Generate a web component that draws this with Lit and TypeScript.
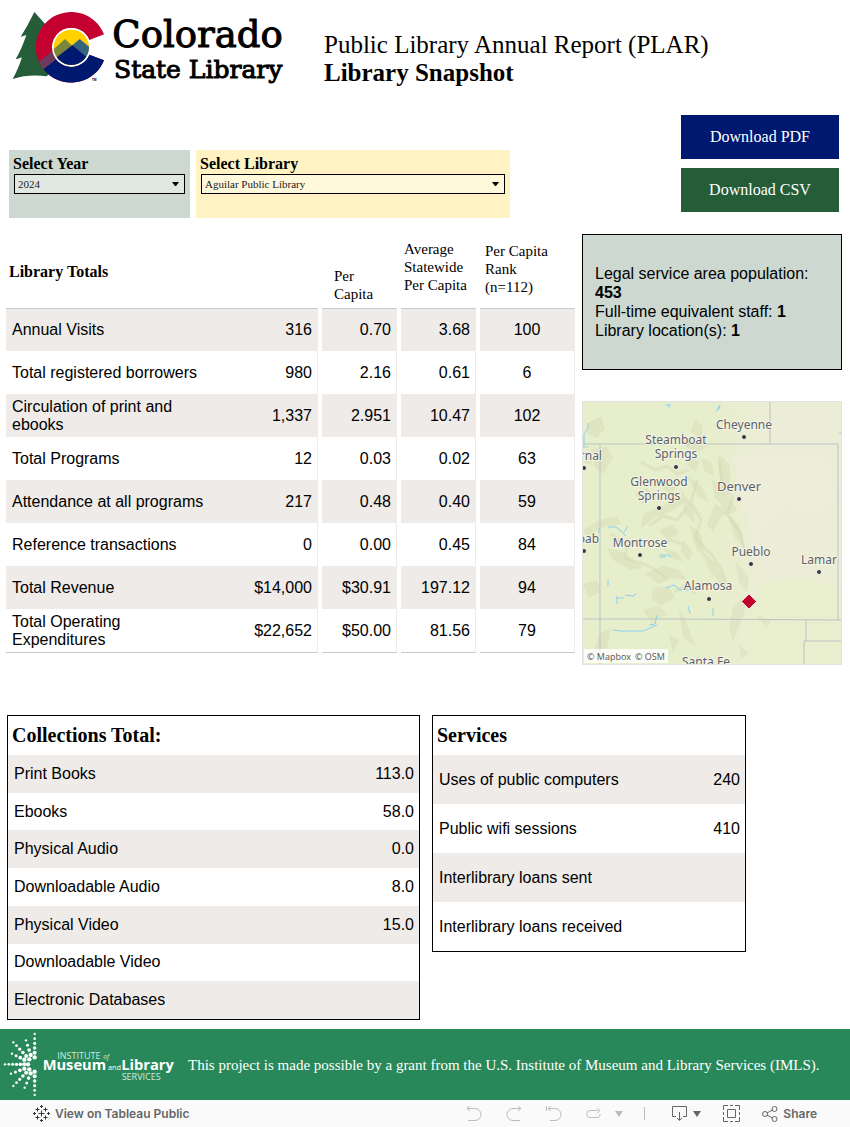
import { LitElement, html, css, svg } from "lit";
import { customElement, state } from "lit/decorators.js";

const SERIF = css`"Liberation Serif", "Times New Roman", serif`;
const SANS = css`"Liberation Sans", Arial, sans-serif`;

@customElement("state-logo")
class StateLogo extends LitElement {
  static styles = css`
    :host { display: block; }
    svg { display: block; width: 300px; height: 100px; }
    .big, .small { stroke: #000; stroke-width: 3px; }
    .big { font: 111px "DejaVu Serif", serif; }
    .small { font: 75px "DejaVu Serif", serif; }
    .tm { font: bold 10px ${SANS}; }
  `;
  render() {
    return html`<svg viewBox="0 0 900 300" role="img" aria-label="Colorado State Library">
      <defs>
        <clipPath id="c"><path d="M312 103A106 106 0 1 0 312 181L268 164A58 58 0 1 1 268 120Z" /></clipPath>
        <clipPath id="d"><circle cx="214" cy="142" r="53" /></clipPath>
      </defs>
      <path fill="#245d38" d="M103 36C90 63 76 88 62 110Q70 109 79 105C70 132 60 155 47 178Q56 177 66 172C58 197 49 218 38 237Q85 222 140 229L170 200V110Z" />
      <g clip-path="url(#c)">
        <rect x="90" y="20" width="240" height="240" fill="#c3002f" />
        <path fill="#6d3a5d" d="M100 197L165 148L190 175L120 222Z" />
        <path fill="#001970" d="M100 232L214 142H340V270H100Z" />
      </g>
      <circle cx="214" cy="142" r="58" fill="#fff" />
      <g clip-path="url(#d)">
        <rect x="150" y="80" width="130" height="130" fill="#ffd100" />
        <path fill="#7a863b" d="M140 166L195 117L230 150L170 200Z" />
        <path fill="#35647e" d="M239 117L290 160L260 200L200 150Z" />
        <path fill="#001970" d="M217 136L290 196V220H130V202Z" />
      </g>
      <text class="tm" x="275" y="242">TM</text>
      <text class="big" x="337" y="142">Colorado</text>
      <text class="small" x="342" y="234">State Library</text>
    </svg>`;
  }
}

const RAYS: number[][] = [
  [104, 97, 104, 27, 6], [92, 90, 78, 46, 4], [88, 103, 40, 52, 6], [73, 104, 36, 86, 4],
  [84, 118, 15, 118, 7],
  [73, 131, 33, 146, 4], [88, 133, 40, 183, 6], [92, 145, 74, 188, 4], [104, 140, 104, 210, 6],
];

@customElement("imls-logo")
class ImlsLogo extends LitElement {
  static styles = css`
    :host { display: block; }
    svg { display: block; width: 180px; height: 71px; fill: #fff; }
    .thin { font: 400 27px "Open Sans", sans-serif; fill: #d5e8de; }
    .thin-italic { font: italic 20px "Open Sans", sans-serif; fill: #d5e8de; }
    .bold { font: 700 44px "Open Sans", sans-serif; }
    .mid { font: 400 22px "Open Sans", sans-serif; }
  `;
  render() {
    return html`<svg viewBox="0 12 540 213" role="img" aria-label="Institute of Museum and Library Services">
      ${RAYS.map(([x1, y1, x2, y2, n]) =>
        Array.from({ length: n }, (_, i) => {
          const t = i / (n - 1);
          return svg`<circle cx=${x1 + (x2 - x1) * t} cy=${y1 + (y2 - y1) * t} r=${6.5 - 3 * t} />`;
        }))}
      <text class="thin" x="172" y="101">INSTITUTE</text>
      <text class="thin-italic" x="310" y="101">of</text>
      <text class="bold" x="128" y="135">Museum</text>
      <text class="mid" x="324" y="135">and</text>
      <text class="bold" x="364" y="135">Library</text>
      <text class="thin" x="365" y="164">SERVICES</text>
    </svg>`;
  }
}

interface Place { name: string[]; x: number; y: number; dx: number; dy: number; big?: boolean; }

const PLACES: Place[] = [
  { name: ["Cheyenne"], x: 161, y: 27, dx: 161, dy: 36 },
  { name: ["Steamboat", "Springs"], x: 93, y: 42, dx: 93, dy: 66 },
  { name: ["Glenwood", "Springs"], x: 76, y: 84, dx: 76, dy: 107 },
  { name: ["Denver"], x: 156, y: 89, dx: 156, dy: 98, big: true },
  { name: ["Montrose"], x: 57, y: 145, dx: 57, dy: 154 },
  { name: ["Pueblo"], x: 168, y: 154, dx: 168, dy: 163 },
  { name: ["Lamar"], x: 236, y: 162, dx: 236, dy: 171 },
  { name: ["Alamosa"], x: 125, y: 188, dx: 126, dy: 198 },
  { name: ["Vernal"], x: 1, y: 58, dx: 1, dy: 67 },
  { name: ["Moab"], x: 0, y: 141, dx: 1, dy: 150 },
  { name: ["Santa Fe"], x: 123, y: 264, dx: 123, dy: 275 },
];

@customElement("place-map")
class PlaceMap extends LitElement {
  static styles = css`
    :host { display: block; border: 1px solid #e2e2de; }
    svg { display: block; width: 100%; height: auto; overflow: hidden; }
    text { font-family: "Noto Sans", sans-serif; font-size: 12px; }
    .city { fill: #5d6168; text-anchor: middle; stroke: #f4f5e6; stroke-width: 2px; paint-order: stroke; }
    .capital { font-size: 13px; }
    .dot { fill: #34363a; stroke: #f8f8f0; stroke-width: 1px; }
    .border { fill: none; stroke: #bfc1c4; stroke-width: 1px; }
    .water { fill: none; stroke: #86d2f0; stroke-width: 1px; }
    .credit { font-family: "Open Sans", sans-serif; font-size: 9px; fill: #555; }
  `;
  render() {
    return html`<svg viewBox="0 0 258 262" role="img" aria-label="Map of Colorado with the library marked">
      <defs>
        <linearGradient id="land" x1="0" x2="1">
          <stop offset="0.5" stop-color="#e7eecb" />
          <stop offset="0.72" stop-color="#ecedd7" />
        </linearGradient>
      </defs>
      <rect width="258" height="262" fill="url(#land)" />
      <path fill="#f0ecdc" opacity="0.6" d="M150 55L190 50L245 58L252 100L225 112L205 104L185 118L172 150L166 120L155 95Z" />
      <path fill="#e8edcc" opacity="0.8" d="M180 182L215 175L258 185V262H165V205Z" />
      <g fill="#cdd1ab" opacity="0.3">
        <path d="M4 22L18 14L22 26L14 36L4 32ZM8 48L24 44L30 56L20 72L12 66ZM112 17L120 25L118 36L108 30ZM97 40L112 34L126 42L116 50L104 46ZM135 52L146 62L148 78L140 86L136 72ZM128 76L142 88L154 108L148 112L132 96Z" />
        <path d="M60 112L78 105L96 94L104 98L90 108L72 116L58 126ZM0 128L16 118L34 114L38 122L18 126L4 134ZM24 146L40 150L60 166L48 168L30 158ZM104 74L118 84L126 100L116 96ZM98 88L110 104L112 122L102 112ZM106 122L118 132L122 156L114 148Z" />
        <path d="M120 150L134 162L146 186L138 182L126 168ZM132 102L124 122L130 130L138 114L150 110ZM144 110L156 124L162 146L152 136ZM152 158L166 176L164 190L156 180ZM150 204L166 192L160 214L150 240L146 226ZM156 242L166 252L158 256Z" />
        <path d="M62 172L80 164L96 168L104 178L90 176L76 182ZM70 186L86 184L92 196L78 204L68 196ZM60 208L76 204L84 212L68 220ZM96 206L104 222L112 244L100 236ZM0 182L14 178L18 190L6 196ZM16 232L28 226L24 246L12 248ZM76 128L90 122L96 132L84 138ZM80 146L94 150L100 160L88 156Z" />
        <path d="M52 92L64 86L70 94L58 102ZM106 54L116 60L112 70L104 64ZM118 56L128 60L132 74L122 70ZM84 78L94 84L88 92L80 88ZM100 138L110 150L106 160L98 150ZM174 214L188 218L184 226ZM0 60L8 56L10 64ZM86 232L96 238L90 250Z" />
      </g>
      <g fill="none" stroke="#c9cca5" stroke-width="3" opacity="0.28">
        <path d="M58 60L72 68L84 64L94 72L106 68M114 78L108 100L118 118L112 136L128 152L138 166L146 190M136 60L140 84L150 96L144 112L158 132L162 154M28 132L44 144L42 156L66 164L84 176M66 124L80 114L94 118L104 106M72 146L88 138L100 142M92 190L104 182L112 192" />
      </g>
      <g class="water">
        <path d="M83 3h5M86 3v3M134 7l3-4l-1 4l-3 2M1 44v-12l4-6v-5M0 45h5M100 30v5l4 2M25 125h8l5 4l5 5M41 130l4-6M16 131v-5M76 153h9l3 2M77 155h6M25 178v6M83 186l8-3l6 5h9M33 196h8M34 194v8M42 193l8 1l3-2M105 204l2 8M130 206v8M30 228l8 1h22l14-6M66 223l6-1l2-9M115 255v5M257 30v2" />
      </g>
      <path class="border" d="M187 0V42M0 42H255M17 42V262M255 42V218M0 217H92L258 218M223 218V239M258 239H221V262" />
      ${PLACES.map((p) => svg`
        <circle class="dot" cx=${p.dx} cy=${p.dy - 1} r="2.5" />
        ${p.name.map((line, i) => svg`<text class="city ${p.big ? "capital" : ""}" x=${p.x} y=${p.y + i * 14}>${line}</text>`)}
      `)}
      <path d="M166 192L173.500 199.500L166 207L158.500 199.500Z" fill="#c3002f" stroke="#f3e3dc" stroke-width="1" />
      <rect x="1" y="247" width="84" height="14" fill="#fff" opacity="0.8" />
      <text class="credit" x="4" y="258">© Mapbox</text>
      <text class="credit" x="52" y="258">© OSM</text>
    </svg>`;
  }
}

const TOTALS: string[][] = [
  ["Annual Visits", "316", "0.70", "3.68", "100"],
  ["Total registered borrowers", "980", "2.16", "0.61", "6"],
  ["Circulation of print and ebooks", "1,337", "2.951", "10.47", "102"],
  ["Total Programs", "12", "0.03", "0.02", "63"],
  ["Attendance at all programs", "217", "0.48", "0.40", "59"],
  ["Reference transactions", "0", "0.00", "0.45", "84"],
  ["Total Revenue", "$14,000", "$30.91", "197.12", "94"],
  ["Total Operating Expenditures", "$22,652", "$50.00", "81.56", "79"],
];

const COLLECTIONS: string[][] = [
  ["Print Books", "113.0"], ["Ebooks", "58.0"], ["Physical Audio", "0.0"], ["Downloadable Audio", "8.0"],
  ["Physical Video", "15.0"], ["Downloadable Video", ""], ["Electronic Databases", ""],
];

const SERVICES: string[][] = [
  ["Uses of public computers", "240"], ["Public wifi sessions", "410"],
  ["Interlibrary loans sent", ""], ["Interlibrary loans received", ""],
];

@customElement("app-root")
class AppRoot extends LitElement {
  @state() private year = "2024";
  @state() private library = "Aguilar Public Library";

  static styles = css`
    :host { display: block; background: #fff; color: #000; font-family: ${SANS}; font-size: 16px; }
    * { box-sizing: border-box; }
    h1, h2, p { margin: 0; font-weight: 400; }
    button { border: 0; background: none; padding: 0; font: inherit; color: inherit; cursor: pointer; }

    .header { display: flex; gap: 24px; height: 115px; }
    .title { font: 25px/28px ${SERIF}; padding-top: 31px; }
    .title strong { display: block; }

    .controls { display: grid; grid-template-columns: 181fr 314fr 159fr 158fr; column-gap: 6px; padding: 0 11px 0 9px; align-items: end; }
    .filter { display: flex; flex-direction: column; padding: 4px 5px 24px; margin-bottom: -6px; }
    .filter label { font: bold 16px/20px ${SERIF}; margin-left: -1px; }
    .year { background: #cdd9d0; }
    .library { background: #fff3c4; }
    .pick { display: grid; }
    .pick > * { grid-area: 1 / 1; }
    .pick svg { place-self: center end; margin-right: 6px; pointer-events: none; }
    .pick select { appearance: none; height: 20px; width: 100%; border: 1px solid #000; border-radius: 0; padding: 0 3px; color: #222; background: rgba(255, 255, 255, 0.4); font: 11px ${SERIF}; }
    .downloads { display: grid; gap: 9px; grid-column: 4; }
    .downloads button { height: 44px; color: #fff; font: 16px ${SERIF}; }
    .pdf { background: #001970; }
    .csv { background: #245d38; }

    .main { display: grid; grid-template-columns: 569fr 260fr; column-gap: 7px; padding: 22px 8px 0 6px; align-items: start; }
    table { border-collapse: collapse; width: 100%; display: block; }
    thead, tbody { display: block; }
    th { font-weight: 400; text-align: left; padding: 0; }
    td { padding: 0; }

    .totals tr { display: grid; grid-template-columns: 208fr 104fr 4px 75fr 4px 75fr 4px 95fr; }
    .totals tr > :nth-child(3) { grid-column: 4; }
    .totals tr > :nth-child(4) { grid-column: 6; }
    .totals tr > :nth-child(5) { grid-column: 8; }
    .totals thead th { font: 15px/18px ${SERIF}; height: 74px; display: flex; align-items: flex-end; }
    .totals thead .h-name { font: bold 16px/18px ${SERIF}; grid-column: 1 / 3; padding: 0 3px 27px; }
    .totals thead tr > .h-per { grid-column: 4; padding: 0 12px 5px; }
    .totals thead tr > .h-avg { grid-column: 6; padding: 0 0 14px 3px; }
    .totals thead tr > .h-rank { grid-column: 8; padding: 0 0 12px 5px; }
    .totals tbody tr { height: 43px; }
    .totals tbody th, .totals tbody td { display: flex; align-items: center; line-height: 18px; }
    .totals tbody th { padding: 0 6px; }
    .totals tbody td { justify-content: flex-end; padding-right: 5px; border-right: 1px solid #eeebe8; }
    .totals tbody tr > :last-child { justify-content: center; padding: 0; }
    .totals tbody tr:nth-child(odd) > * { background: #eeebe8; }
    .totals tbody tr:first-child > * { border-top: 1px solid #c8c8c8; }
    .totals tbody tr:last-child { height: 44px; }
    .totals tbody tr:last-child > * { border-bottom: 1px solid #c8c8c8; }

    .side { display: grid; gap: 31px; }
    .facts { border: 1px solid #000; background: #cdd9d0; padding: 29px 12px; line-height: 19px; }

    .lists { display: grid; grid-template-columns: 413fr 314fr 92fr; column-gap: 12px; padding: 50px 0 9px 7px; align-items: start; }
    .panel { border: 1px solid #000; }
    .panel h2 { font: bold 20px/39px ${SERIF}; padding-left: 4px; }
    .panel tbody { display: grid; grid-auto-rows: 1fr; }
    .panel tr { display: flex; justify-content: space-between; align-items: center; padding: 0 5px 0 6px; line-height: 18px; }
    .panel tr:nth-child(odd) { background: #eeebe8; }
    .collections tbody { height: 264px; }
    .services tr { height: 49px; }

    .grant { display: flex; align-items: center; gap: 8px; background: #28885a; color: #fff; }
    .grant p { font: 15px/20px ${SERIF}; }

    .toolbar { display: flex; align-items: center; height: 27px; background: #fafafa; color: #666; padding: 0 33px; }
    .toolbar button, .toolbar a { display: flex; align-items: center; gap: 5px; color: #666; text-decoration: none; font: 600 12px/16px Inter, sans-serif; }
    .toolbar svg { display: block; fill: none; stroke: currentColor; }
    .tools { display: flex; align-items: center; margin-left: auto; }
    .tools .muted { color: #bcbcbc; }
    .history { display: flex; gap: 22px; }
    .divider { width: 1px; height: 13px; background: #bcbcbc; margin: 0 26px 0 21px; }
    .actions { display: flex; gap: 22px; }
    .toolbar .filled { fill: currentColor; stroke: none; }
  `;

  private arrow() {
    return html`<svg width="7" height="5" viewBox="0 0 7 5" aria-hidden="true"><path d="M0 0H7L4 4H3Z" /></svg>`;
  }

  private panel(kind: string, title: string, rows: string[][]) {
    return html`<section class="panel ${kind}">
      <h2>${title}</h2>
      <table aria-label=${title}>
        <tbody>${rows.map(([name, value]) => html`<tr><th scope="row">${name}</th><td>${value}</td></tr>`)}</tbody>
      </table>
    </section>`;
  }

  render() {
    return html`
      <header class="header">
        <state-logo></state-logo>
        <h1 class="title">Public Library Annual Report (PLAR) <strong>Library Snapshot</strong></h1>
      </header>

      <div class="controls">
        <div class="filter year">
          <label for="year">Select Year</label>
          <div class="pick">
            <select id="year" @change=${(e: Event) => (this.year = (e.target as HTMLSelectElement).value)}>
              <option>${this.year}</option>
            </select>
            ${this.arrow()}
          </div>
        </div>
        <div class="filter library">
          <label for="library">Select Library</label>
          <div class="pick">
            <select id="library" @change=${(e: Event) => (this.library = (e.target as HTMLSelectElement).value)}>
              <option>${this.library}</option>
            </select>
            ${this.arrow()}
          </div>
        </div>
        <div class="downloads">
          <button class="pdf">Download PDF</button>
          <button class="csv">Download CSV</button>
        </div>
      </div>

      <main>
        <div class="main">
          <table class="totals">
            <thead>
              <tr>
                <th class="h-name" scope="col">Library Totals</th>
                <th class="h-per" scope="col">Per Capita</th>
                <th class="h-avg" scope="col">Average Statewide Per Capita</th>
                <th class="h-rank" scope="col">Per Capita<br />Rank<br />(n=112)</th>
              </tr>
            </thead>
            <tbody>
              ${TOTALS.map(([name, ...cells]) => html`<tr><th scope="row">${name}</th>${cells.map((c) => html`<td>${c}</td>`)}</tr>`)}
            </tbody>
          </table>
          <div class="side">
            <div class="facts">
              <p>Legal service area population: <strong>453</strong></p>
              <p>Full-time equivalent staff: <strong>1</strong></p>
              <p>Library location(s): <strong>1</strong></p>
            </div>
            <place-map></place-map>
          </div>
        </div>
        <div class="lists">
          ${this.panel("collections", "Collections Total:", COLLECTIONS)}
          ${this.panel("services", "Services", SERVICES)}
        </div>
      </main>

      <div class="grant">
        <imls-logo></imls-logo>
        <p>This project is made possible by a grant from the U.S. Institute of Museum and Library Services (IMLS).</p>
      </div>

      <footer class="toolbar">
        <a href="#view">
          <svg width="17" height="17" viewBox="0 0 17 17"><path stroke="#333" d="M8.500 5.500v6M5.500 8.500h6M4.500 2.500v4M2.500 4.500h4M12.500 2.500v4M10.500 4.500h4M4.500 10.500v4M2.500 12.500h4M12.500 10.500v4M10.500 12.500h4M8.500 0v3M7 1.500h3M8.500 14v3M7 15.500h3M1.500 7v3M0 8.500h3M15.500 7v3M14 8.500h3" /></svg>
          View on Tableau Public
        </a>
        <div class="tools">
          <div class="history">
            <button class="muted" aria-label="Undo"><svg width="18" height="16"><path d="M2 2.500H10A6 6 0 0 1 10 14.500H3M5 0L2 2.500L5 5" /></svg></button>
            <button class="muted" aria-label="Redo"><svg width="18" height="16"><path d="M16 2.500H8A6 6 0 0 0 8 14.500H15M13 0L16 2.500L13 5" /></svg></button>
            <button class="muted" aria-label="Revert"><svg width="18" height="16"><path d="M3 2.500H10A6 6 0 0 1 10 14.500H5M6 0L3 2.500L6 5M1.500 0V5" /></svg></button>
            <button class="muted" aria-label="Refresh"><svg width="18" height="16"><path d="M13 4.500H5A3 3 0 0 0 2 7.500A3 3 0 0 0 5 11.500H12A3 3 0 0 0 15 8M12 2L15 4.500L12 7" /></svg></button>
          </div>
          <button class="muted caret" aria-label="Refresh options"><svg class="filled" width="20" height="6"><path d="M12 0H20L16 6Z" /></svg></button>
          <span class="divider"></span>
          <div class="actions">
            <button aria-label="Download"><svg width="17" height="17"><path d="M5 11.500H1.500V1.500H15.500V11.500H12M8.500 7V15M6 13L8.500 15.500L11 13" /></svg><svg class="filled" width="8" height="6"><path d="M0 0H8L4 6Z" /></svg></button>
            <button aria-label="Full screen"><svg width="17" height="17"><path d="M5 .5H.5V5M12 .5H16.500V5M5 16.500H.5V12M12 16.500H16.500V12M4.500 4.500H12.500V12.500H4.500ZM7 .5H10M7 16.500H10M.5 7V10M16.500 7V10" /></svg></button>
            <button><svg width="16" height="16"><circle cx="3" cy="8" r="2.500" /><circle cx="12.500" cy="3" r="2.500" /><circle cx="12.500" cy="13" r="2.500" /><path d="M5 7L10.500 4M5 9L10.500 12" /></svg>Share</button>
          </div>
        </div>
      </footer>
    `;
  }
}
